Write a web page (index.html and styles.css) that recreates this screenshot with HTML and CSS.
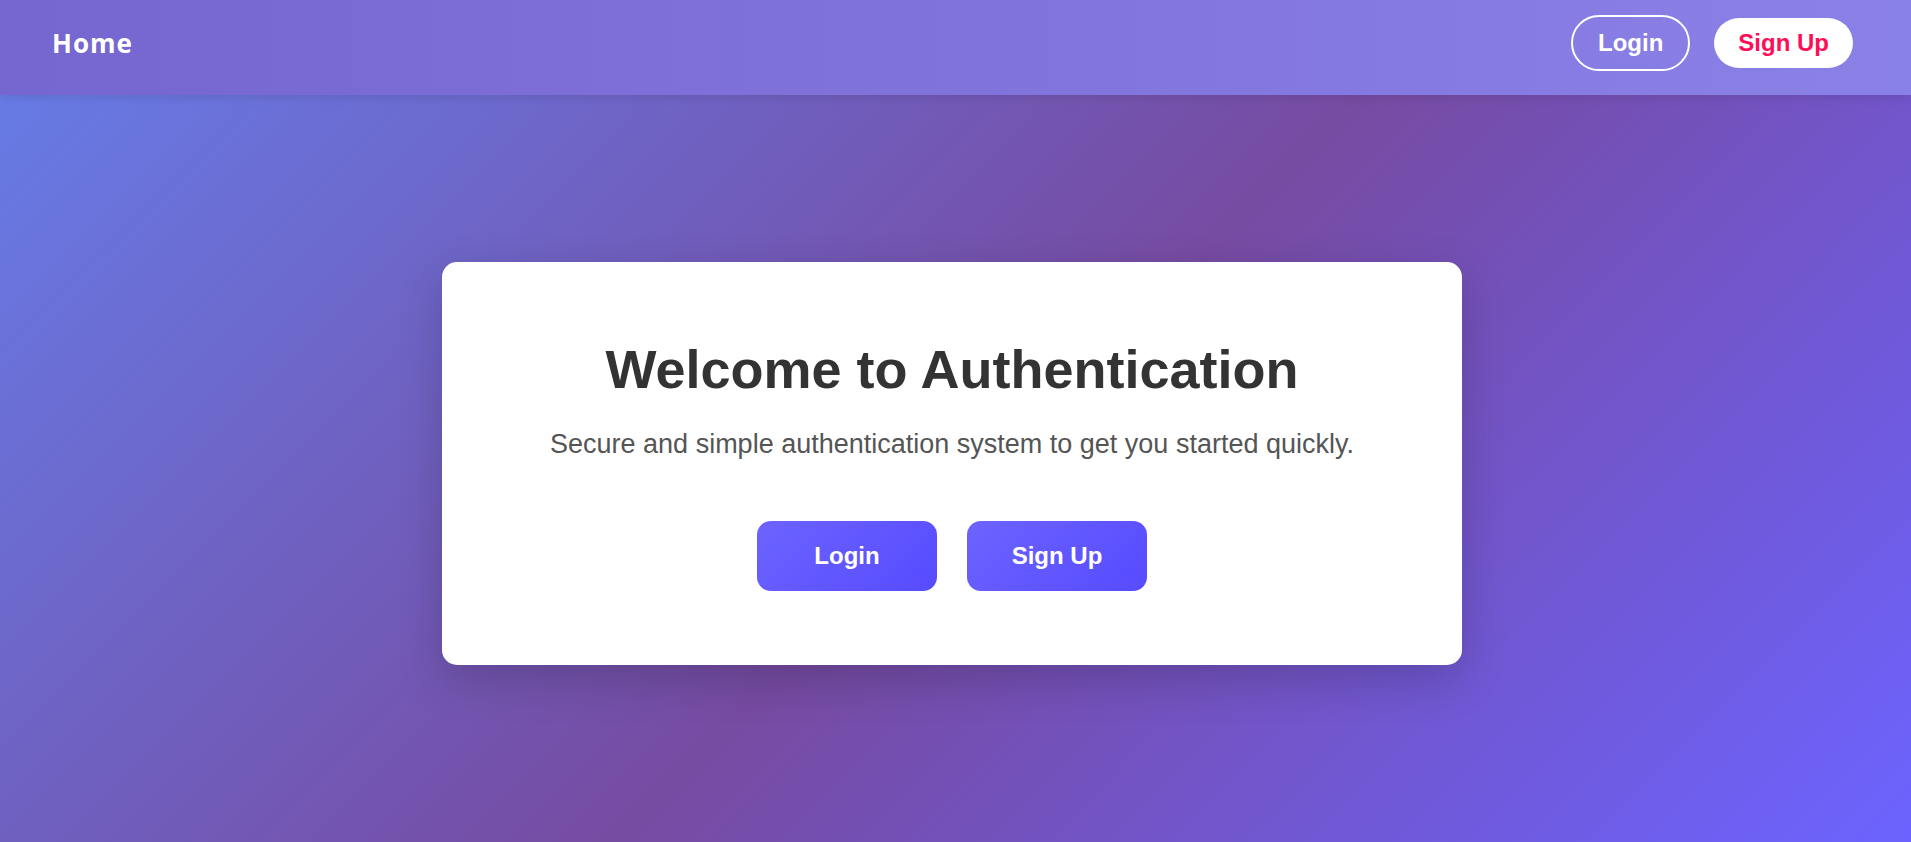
FILE: index.html
```html
<!DOCTYPE html>
<html lang="en">
<head>
<meta charset="utf-8">
<title>Home</title>
<link rel="stylesheet" href="styles.css">
</head>
<body>
  <nav class="navbar">
    <a class="brand" href="#">Home</a>
    <div class="nav-actions">
      <a class="nav-btn nav-login" href="#">Login</a>
      <a class="nav-btn nav-signup" href="#">Sign Up</a>
    </div>
  </nav>
  <main class="main">
    <section class="card">
      <h1 class="title">Welcome to Authentication</h1>
      <p class="subtitle">Secure and simple authentication system to get you started quickly.</p>
      <div class="actions">
        <a class="action-btn" href="#">Login</a>
        <a class="action-btn" href="#">Sign Up</a>
      </div>
    </section>
  </main>
</body>
</html>
```

FILE: styles.css
```css
* {
  box-sizing: border-box;
}

html, body {
  margin: 0;
  padding: 0;
}

body {
  min-height: 100vh;
  font-family: "Liberation Sans", Arial, sans-serif;
  background: linear-gradient(135deg, #667eea 0%, #764ba2 53%, #6c63ff 100%);
  display: flex;
  flex-direction: column;
}

a {
  text-decoration: none;
}

.navbar {
  height: 95px;
  display: flex;
  align-items: center;
  justify-content: space-between;
  padding: 0 58px 9px 52px;
  background: linear-gradient(90deg, #7666cf 0%, #8a81e7 100%);
  box-shadow: 0 2px 10px rgba(0, 0, 0, 0.1);
  position: relative;
  z-index: 1;
}

.brand {
  font-family: "Open Sans", "Liberation Sans", sans-serif;
  font-weight: 700;
  font-size: 26px;
  letter-spacing: 1px;
  color: #ffffff;
}

.nav-actions {
  display: flex;
  align-items: center;
  gap: 24px;
}

.nav-btn {
  font-weight: 700;
  font-size: 24px;
  line-height: 28px;
  border-radius: 50px;
}

.nav-login {
  color: #ffffff;
  border: 2px solid #ffffff;
  padding: 12px 25px;
}

.nav-signup {
  color: #ff0d57;
  background: #ffffff;
  padding: 11px 24px;
}

.main {
  flex: 1;
  display: flex;
  align-items: center;
  justify-content: center;
  padding: 0 7px 11px 0;
}

.card {
  width: 1020px;
  background: #ffffff;
  border-radius: 15px;
  padding: 76px 60px 74px;
  text-align: center;
  box-shadow: 0 15px 45px rgba(0, 0, 0, 0.18);
}

.title {
  margin: 0;
  font-size: 54px;
  font-weight: 700;
  line-height: normal;
  color: #333333;
}

.subtitle {
  margin: 29px 0 0;
  font-size: 27px;
  line-height: normal;
  color: #555555;
}

.actions {
  margin-top: 61px;
  display: flex;
  justify-content: center;
  gap: 30px;
}

.action-btn {
  width: 180px;
  height: 70px;
  display: flex;
  align-items: center;
  justify-content: center;
  border-radius: 14px;
  background: linear-gradient(135deg, #6c63ff 0%, #574bff 100%);
  color: #ffffff;
  font-weight: 700;
  font-size: 24px;
}
```
